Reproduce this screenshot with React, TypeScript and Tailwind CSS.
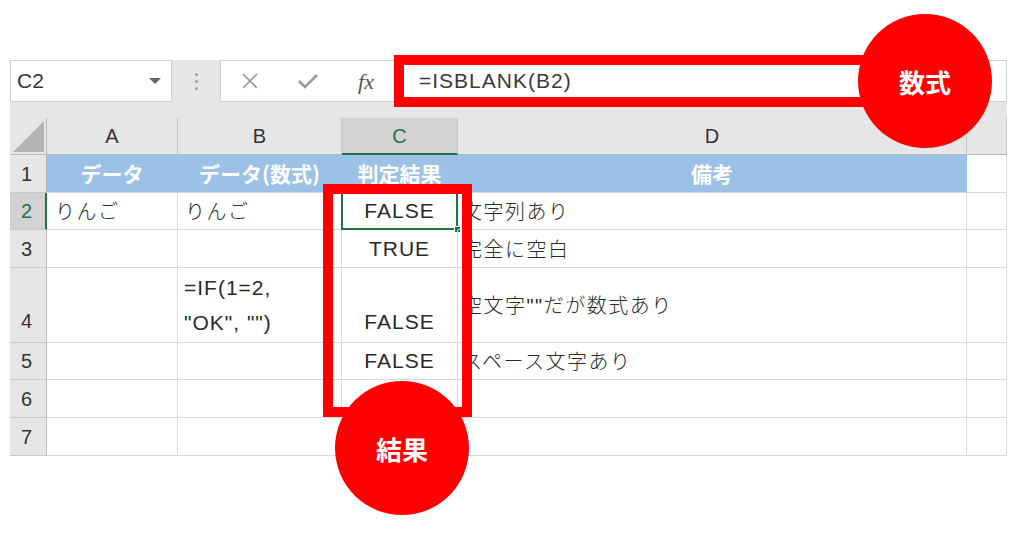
import React from "react";

const LAT = "font-[family-name:'Liberation_Sans','Noto_Sans_CJK_JP',sans-serif]";
const JP = "font-[family-name:'Noto_Sans_CJK_JP',sans-serif]";

function Cell({ className = "", children }: { className?: string; children?: React.ReactNode }) {
  return <div className={`relative flex border-r border-b border-[#dadada] ${className}`}>{children}</div>;
}

function RowHead({ n, active, className = "" }: { n: string; active?: boolean; className?: string }) {
  return (
    <div
      className={`flex pl-[11px] text-[20px] ${LAT} border-b border-[#c9c9c9] ${
        active
          ? "bg-[#d2d2d2] text-[#217346] border-r-2 border-r-[#217346]"
          : "bg-[#e6e6e6] text-[#333] border-r border-r-[#b8b8b8]"
      } ${className}`}
    >
      {n}
    </div>
  );
}

function ColHead({ label, active }: { label: string; active?: boolean }) {
  return (
    <div
      className={`flex items-center justify-center text-[20px] ${LAT} border-r border-[#c6c6c6] ${
        active
          ? "bg-[#d2d2d2] text-[#217346] border-b-2 border-b-[#217346]"
          : "bg-[#e6e6e6] text-[#333] border-b border-b-[#b8b8b8]"
      }`}
    >
      {label}
    </div>
  );
}

export default function App() {
  const jpCell = `${JP} text-[20px] tracking-[1.5px] font-light text-[#2a2a2a]`;
  const latCell = `${LAT} text-[21px] tracking-[1px] text-[#2a2a2a]`;
  const blue = `bg-[#9bc2e6] border-r-[#9bc2e6] items-center justify-center ${JP} text-[21px] font-bold text-white`;

  return (
    <div className="relative w-[1024px] h-[550px] bg-white overflow-hidden">
      <div className="pt-[60px] pl-[10px]">
        <div className="w-[997px] bg-[#e6e6e6]">
          {/* formula bar */}
          <div className="flex h-[42px]">
            <div className="w-[162px] bg-white border border-[#cfcfcf] flex items-center justify-between pl-[6px] pr-[10px]">
              <span className={`${LAT} text-[21px] text-[#333]`}>C2</span>
              <svg width="12" height="7" viewBox="0 0 12 7">
                <path d="M0 0 L12 0 L6 6 Z" fill="#666" />
              </svg>
            </div>
            <div className="w-[48px] flex flex-col items-center justify-center gap-[4px]">
              <span className="w-[3px] h-[3px] rounded-full bg-[#9a9a9a]" />
              <span className="w-[3px] h-[3px] rounded-full bg-[#9a9a9a]" />
              <span className="w-[3px] h-[3px] rounded-full bg-[#9a9a9a]" />
            </div>
            <div className="flex-1 bg-white border border-[#cfcfcf] flex items-center">
              <div className="w-[58px] flex justify-center">
                <svg width="18" height="18" viewBox="0 0 18 18">
                  <path d="M2 2 L16 16 M16 2 L2 16" stroke="#9a9a9a" strokeWidth="1.6" />
                </svg>
              </div>
              <div className="w-[58px] flex justify-center">
                <svg width="22" height="18" viewBox="0 0 22 18">
                  <path d="M2 9 L8 15 L20 3" stroke="#9a9a9a" strokeWidth="2.6" fill="none" />
                </svg>
              </div>
              <div className="w-[58px] flex justify-center">
                <span className="font-['Liberation_Serif',serif] italic text-[22px] text-[#555]">fx</span>
              </div>
              <span className={`ml-[24px] ${LAT} text-[21px] tracking-[1px] text-[#3a3a3a]`}>=ISBLANK(B2)</span>
            </div>
          </div>
          <div className="h-[16px]" />

          {/* sheet */}
          <div className="grid grid-cols-[37px_131px_164px_116px_509px_40px] grid-rows-[37px_38px_37px_38px_75px_37px_38px_38px] bg-white">
            <div className="bg-[#e6e6e6] border-r border-b border-[#b8b8b8] flex items-end justify-end pr-[2px] pb-[2px]">
              <svg width="31" height="31" viewBox="0 0 31 31">
                <path d="M31 0 L31 31 L0 31 Z" fill="#b4b4b4" />
              </svg>
            </div>
            <ColHead label="A" />
            <ColHead label="B" />
            <ColHead label="C" active />
            <ColHead label="D" />
            <ColHead label="" />

            {/* row 1 */}
            <RowHead n="1" className="items-center" />
            <Cell className={blue}>データ</Cell>
            <Cell className={blue}>データ(数式)</Cell>
            <Cell className={blue}>判定結果</Cell>
            <Cell className={blue}>備考</Cell>
            <Cell />

            {/* row 2 */}
            <RowHead n="2" active className="items-center" />
            <Cell className={`items-center pl-[8px] ${jpCell}`}>りんご</Cell>
            <Cell className={`items-center pl-[7px] ${jpCell}`}>りんご</Cell>
            <Cell className={`items-center justify-center ${latCell}`}>
              FALSE
              <div className="absolute -left-px -top-px -right-px -bottom-px border-2 border-[#217346]" />
              <div className="absolute -right-[4px] -bottom-[4px] w-[7px] h-[7px] bg-[#217346] border border-white" />
            </Cell>
            <Cell className={`items-center pl-[4px] ${jpCell}`}>文字列あり</Cell>
            <Cell />

            {/* row 3 */}
            <RowHead n="3" className="items-center" />
            <Cell />
            <Cell />
            <Cell className={`items-center justify-center ${latCell}`}>TRUE</Cell>
            <Cell className={`items-center pl-[4px] ${jpCell}`}>完全に空白</Cell>
            <Cell />

            {/* row 4 */}
            <RowHead n="4" className="items-end pb-[6px]" />
            <Cell />
            <Cell className={`items-end pb-[2px] pl-[6px] leading-[35px] ${latCell}`}>
              <div>
                =IF(1=2,
                <br />
                "OK", "")
              </div>
            </Cell>
            <Cell className={`items-end justify-center pb-[3px] leading-[35px] ${latCell}`}>FALSE</Cell>
            <Cell className={`items-center pl-[4px] ${jpCell}`}>
              <span>
                空文字<span className={LAT}>""</span>だが数式あり
              </span>
            </Cell>
            <Cell />

            {/* row 5 */}
            <RowHead n="5" className="items-center" />
            <Cell />
            <Cell />
            <Cell className={`items-center justify-center ${latCell}`}>FALSE</Cell>
            <Cell className={`items-center pl-[4px] ${jpCell}`}>スペース文字あり</Cell>
            <Cell />

            {/* row 6 */}
            <RowHead n="6" className="items-center" />
            <Cell />
            <Cell />
            <Cell />
            <Cell />
            <Cell />

            {/* row 7 */}
            <RowHead n="7" className="items-center" />
            <Cell />
            <Cell />
            <Cell />
            <Cell />
            <Cell />
          </div>
        </div>
      </div>

      {/* annotations */}
      <div className="absolute left-[394px] top-[55px] w-[500px] h-[52px] border-[10px] border-[#ff0000]" />
      <div className="absolute left-[858px] top-[14px] w-[134px] h-[134px] rounded-full bg-[#ff0000] flex items-center justify-center">
        <span className={`${JP} text-[26px] font-bold text-white`}>数式</span>
      </div>
      <div className="absolute left-[323px] top-[184px] w-[149px] h-[233px] border-[10px] border-[#ff0000]" />
      <div className="absolute left-[335px] top-[381px] w-[134px] h-[134px] rounded-full bg-[#ff0000] flex items-center justify-center">
        <span className={`${JP} text-[26px] font-bold text-white`}>結果</span>
      </div>
    </div>
  );
}
